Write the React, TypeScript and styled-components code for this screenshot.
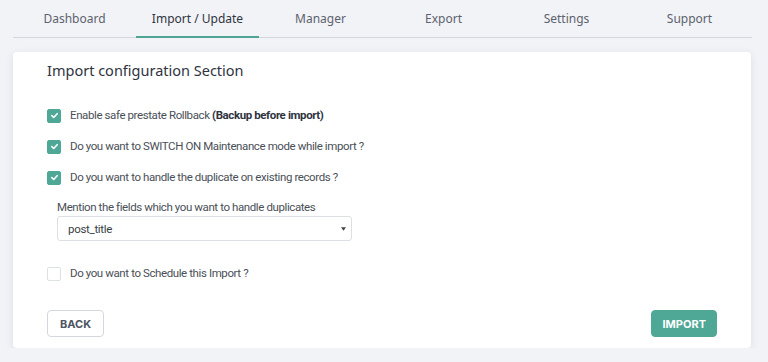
import React, { useState } from 'react';
import styled, { createGlobalStyle } from 'styled-components';

const GlobalStyle = createGlobalStyle`
  body {
    margin: 0;
    background: #f2f3f7;
    font-family: Roboto, "Liberation Sans", sans-serif;
  }
`;

const tabs = ['Dashboard', 'Import / Update', 'Manager', 'Export', 'Settings', 'Support'];

const App = () => {
  const [checks, setChecks] = useState([true, true, true, false]);

  const toggle = (i: number) => {
    setChecks((prev) => prev.map((v, idx) => (idx === i ? !v : v)));
  };

  return (
    <>
      <GlobalStyle />
      <Page>
        <TabBar>
          {tabs.map((tab) => (
            <Tab key={tab} active={tab === 'Import / Update'}>
              {tab}
            </Tab>
          ))}
        </TabBar>
        <Card>
          <Title>Import configuration Section</Title>
          <Options>
            <CheckRow onClick={() => toggle(0)}>
              <Box checked={checks[0]}>{checks[0] && <Tick />}</Box>
              <span>
                Enable safe prestate Rollback <b>(Backup before import)</b>
              </span>
            </CheckRow>
            <CheckRow onClick={() => toggle(1)}>
              <Box checked={checks[1]}>{checks[1] && <Tick />}</Box>
              <span>Do you want to SWITCH ON Maintenance mode while import ?</span>
            </CheckRow>
            <CheckRow onClick={() => toggle(2)}>
              <Box checked={checks[2]}>{checks[2] && <Tick />}</Box>
              <span>Do you want to handle the duplicate on existing records ?</span>
            </CheckRow>
          </Options>
          <FieldGroup>
            <Label>Mention the fields which you want to handle duplicates</Label>
            <Select>
              <span>post_title</span>
              <Caret />
            </Select>
          </FieldGroup>
          <ScheduleRow onClick={() => toggle(3)}>
            <Box checked={checks[3]}>{checks[3] && <Tick />}</Box>
            <span>Do you want to Schedule this Import ?</span>
          </ScheduleRow>
          <Footer>
            <Button>BACK</Button>
            <Button primary>IMPORT</Button>
          </Footer>
        </Card>
      </Page>
    </>
  );
};

const Tick = () => (
  <svg width="9" height="9" viewBox="0 0 10 10">
    <path d="M2 5.2 L4.1 7.2 L8 3" fill="none" stroke="#fff" strokeWidth="1.8" strokeLinecap="round" strokeLinejoin="round" />
  </svg>
);

const Caret = () => (
  <svg width="5" height="4" viewBox="0 0 6 4">
    <path d="M0 0 L6 0 L3 4 Z" fill="#444" />
  </svg>
);

const Page = styled.div`
  width: 739px;
  margin-left: 13px;
`;

const TabBar = styled.div`
  display: grid;
  grid-template-columns: repeat(6, 123px);
  height: 37px;
  border-bottom: 1px solid #d3d6dc;
`;

const Tab = styled.div<{ active?: boolean }>`
  display: flex;
  align-items: center;
  justify-content: center;
  font-family: 'Noto Sans', sans-serif;
  font-size: 12px;
  color: ${(p) => (p.active ? '#2f3540' : '#5c626d')};
  border-bottom: 2px solid ${(p) => (p.active ? '#4da593' : 'transparent')};
  margin-bottom: -1px;
  cursor: pointer;
`;

const Card = styled.div`
  margin-top: 14px;
  width: 738px;
  height: 296px;
  box-sizing: border-box;
  background: #fff;
  border-radius: 4px;
  box-shadow: 0 2px 8px rgba(40, 50, 80, 0.1);
  padding: 8px 34px 0 34px;
  display: flex;
  flex-direction: column;
`;

const Title = styled.h2`
  margin: 0;
  font-family: 'Noto Sans', sans-serif;
  font-weight: 400;
  font-size: 14.5px;
  line-height: 20px;
  color: #2f3440;
`;

const Options = styled.div`
  margin-top: 28px;
  display: flex;
  flex-direction: column;
  gap: 16px;
`;

const CheckRow = styled.label`
  display: flex;
  align-items: center;
  gap: 9px;
  font-size: 11.5px;
  letter-spacing: -0.4px;
  line-height: 15px;
  color: #4a4f57;
  cursor: pointer;
  b {
    font-weight: 700;
    color: #2f3440;
  }
`;

const Box = styled.span<{ checked?: boolean }>`
  width: 14px;
  height: 14px;
  box-sizing: border-box;
  border-radius: 2px;
  display: flex;
  align-items: center;
  justify-content: center;
  background: ${(p) => (p.checked ? '#4fa896' : '#fff')};
  border: 1px solid ${(p) => (p.checked ? '#4fa896' : '#dde0e5')};
`;

const FieldGroup = styled.div`
  margin: 15px 0 0 10px;
  display: flex;
  flex-direction: column;
  gap: 2px;
`;

const Label = styled.div`
  font-size: 11.5px;
  letter-spacing: -0.4px;
  line-height: 14px;
  color: #4a4f57;
`;

const Select = styled.div`
  width: 295px;
  height: 25px;
  box-sizing: border-box;
  border: 1px solid #dcdfe4;
  border-radius: 3px;
  display: flex;
  align-items: center;
  justify-content: space-between;
  padding: 0 5px 0 10px;
  font-size: 11.5px;
  letter-spacing: -0.3px;
  color: #3a3f47;
`;

const ScheduleRow = styled(CheckRow)`
  margin-top: 25px;
`;

const Footer = styled.div`
  margin-top: auto;
  margin-bottom: 11px;
  display: flex;
  justify-content: space-between;
`;

const Button = styled.button<{ primary?: boolean }>`
  height: 27px;
  padding: 0 ${(p) => (p.primary ? '10px' : '12px')};
  border-radius: 4px;
  font-family: Inter, 'Liberation Sans', sans-serif;
  font-weight: 700;
  font-size: 11px;
  letter-spacing: 0;
  cursor: pointer;
  background: ${(p) => (p.primary ? '#4fa896' : '#fff')};
  color: ${(p) => (p.primary ? '#fff' : '#4d5462')};
  border: 1px solid ${(p) => (p.primary ? '#4fa896' : '#d3d8e0')};
`;

export default App;
